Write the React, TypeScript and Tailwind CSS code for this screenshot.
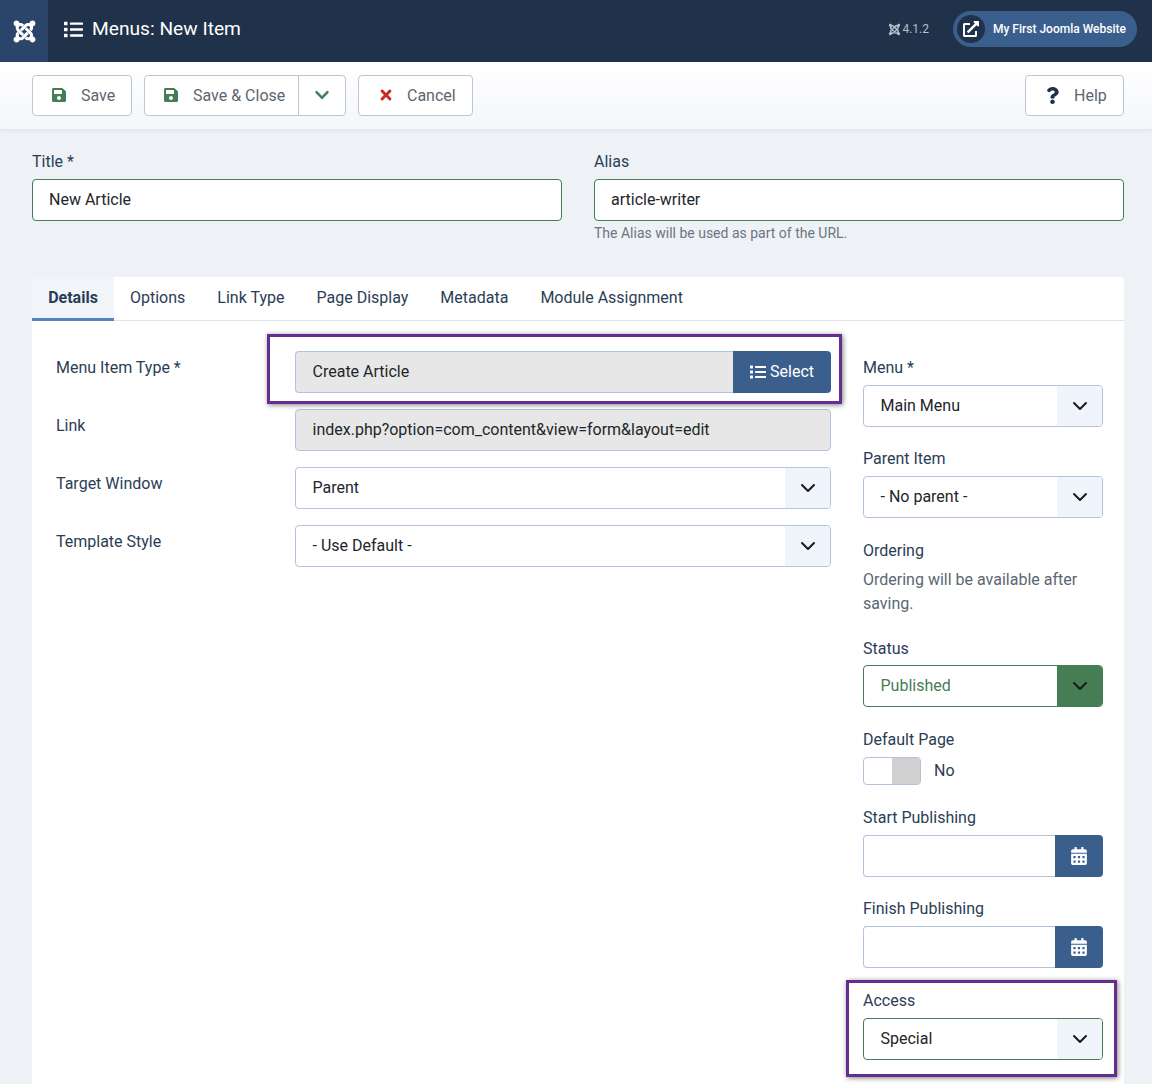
import React from 'react';
import { FaJoomla, FaList, FaSave, FaChevronDown, FaTimes, FaQuestion, FaExternalLinkAlt, FaCalendarAlt } from 'react-icons/fa';

const tabs = ['Options', 'Link Type', 'Page Display', 'Metadata', 'Module Assignment'];

const Arrow = () => (
  <svg width="16" height="16" viewBox="0 0 16 16" fill="none" aria-hidden="true">
    <path d="M2 5l6 6 6-6" stroke="#1a1a1a" strokeWidth="2" strokeLinecap="round" strokeLinejoin="round" />
  </svg>
);

const ToolButton = ({ icon, label, className = '' }: { icon: React.ReactNode; label: string; className?: string }) => (
  <button className={`flex h-[41px] items-center rounded border border-[#bcc7d6] bg-white text-[#5c6670] ${className}`}>
    {icon}
    <span className="mt-[2px]">{label}</span>
  </button>
);

const SelectBox = ({ value, green, published }: { value: string; green?: boolean; published?: boolean }) => (
  <div className={`flex h-[42px] items-stretch overflow-hidden rounded border ${green || published ? 'border-[#457d54]' : 'border-[#b2c4dc]'} bg-white`}>
    <div className={`flex flex-1 items-center pl-[16.5px] ${published ? 'text-[#457d54]' : 'text-[#22262a]'}`}>{value}</div>
    <div className={`flex w-[45px] items-center justify-center ${published ? 'bg-[#457d54]' : 'bg-[#f0f4fb]'}`}>
      <Arrow />
    </div>
  </div>
);

const DateBox = () => (
  <div className="flex h-[42px] items-stretch">
    <div className="flex-1 rounded-l border border-r-0 border-[#b2c4dc] bg-white" />
    <div className="flex w-[48px] items-center justify-center rounded-r bg-[#3b5f8d] text-white">
      <FaCalendarAlt className="text-[18px]" />
    </div>
  </div>
);

const Row = ({ label, children }: { label: string; children: React.ReactNode }) => (
  <div className="flex">
    <div className="w-[239px] pt-[5px] text-[#2b3d55]">{label}</div>
    <div className="w-[536px]">{children}</div>
  </div>
);

const Field = ({ label, className, children }: { label: string; className: string; children?: React.ReactNode }) => (
  <div className={className}>
    <div className="mb-[5px] h-[25px] pt-[1px] leading-[24px] text-[#2b3d55]">{label}</div>
    {children}
  </div>
);

export default function App() {
  return (
    <div className="relative h-[1084px] overflow-hidden bg-[#eef2f7] text-[16px] font-['Roboto',sans-serif]">
      <header className="flex h-[62px] items-center bg-[#20314a] pb-[4px] text-white">
        <div className="-mb-[4px] flex h-[62px] w-[48px] items-center justify-center bg-[#2a4569]">
          <FaJoomla className="text-[25px]" />
        </div>
        <FaList className="ml-[16px] text-[19px]" />
        <h1 className="ml-[9px] text-[19.2px]">Menus: New Item</h1>
        <div className="ml-auto flex items-center text-[12px] text-[#b6bfcb]">
          <FaJoomla className="mr-[1px] text-[13px]" />
          4.1.2
        </div>
        <div className="ml-[24px] mr-[15px] flex h-[36px] w-[184px] items-center rounded-full bg-[#3b5f8d] pl-[4px] text-[12px] font-medium">
          <span className="flex h-[28px] w-[28px] items-center justify-center rounded-full bg-[#20314a]">
            <FaExternalLinkAlt className="text-[16px]" />
          </span>
          <span className="ml-[8px]">My First Joomla Website</span>
        </div>
      </header>

      <div className="flex h-[68px] items-center border-b border-[#e4e8ee] bg-gradient-to-b from-white to-[#f4f6fa] pb-px pl-[32px] pr-[28px] shadow-[0_1px_4px_rgba(0,0,0,0.06)]">
        <ToolButton className="w-[100px] pl-[18px]" label="Save" icon={<FaSave className="mr-[14px] text-[16px] text-[#457d54]" />} />
        <div className="ml-[12px] flex h-[41px] rounded border border-[#bcc7d6] bg-white text-[#5c6670]">
          <div className="flex w-[154px] items-center border-r border-[#bcc7d6] pl-[18px]">
            <FaSave className="mr-[14px] text-[16px] text-[#457d54]" />
            <span className="mt-[2px]">Save &amp; Close</span>
          </div>
          <div className="flex w-[46px] items-center justify-center">
            <FaChevronDown className="text-[16px] text-[#457d54]" />
          </div>
        </div>
        <ToolButton className="ml-[12px] w-[115px] pl-[18.5px]" label="Cancel" icon={<FaTimes className="mr-[13.5px] text-[16px] text-[#c52827]" />} />
        <ToolButton className="ml-auto w-[99px] pl-[18px]" label="Help" icon={<FaQuestion className="mr-[13px] text-[17px] text-[#20314a]" />} />
      </div>

      <main className="pl-[32px] pr-[28px] pt-[20px]">
        <div className="grid grid-cols-2 gap-x-[32px]">
          <div>
            <div className="h-[24px] leading-[24px] text-[#2b3d55]">Title *</div>
            <div className="mt-[5px] flex h-[42px] items-center rounded border border-[#457d54] bg-white pl-[16px] text-[#22262a]">New Article</div>
          </div>
          <div>
            <div className="h-[24px] leading-[24px] text-[#2b3d55]">Alias</div>
            <div className="mt-[5px] flex h-[42px] items-center rounded border border-[#457d54] bg-white pl-[16px] text-[#22262a]">article-writer</div>
            <div className="mt-[2px] text-[14px] text-[#6d757e]">The Alias will be used as part of the URL.</div>
          </div>
        </div>

        <section className="mt-[33px] h-[900px] rounded-t bg-white">
          <nav className="flex h-[44px] border-b border-[#dfe6f0] text-[#2b3d55]">
            <div className="-mb-px flex w-[82px] items-center justify-center border-b-[3px] border-[#5582c0] bg-[#f2f5f9] font-bold">Details</div>
            {tabs.map(t => (
              <div key={t} className="flex items-center px-[16px] pb-[2px]">{t}</div>
            ))}
          </nav>
          <div className="flex pl-[24px] pt-[30px]">
            <div className="flex flex-col gap-[16px]">
              <Row label="Menu Item Type *">
                <div className="flex h-[42px]">
                  <div className="flex flex-1 items-center rounded-l border border-r-0 border-[#b2c4dc] bg-[#e7e7e7] pl-[16.5px] text-[#22262a]">Create Article</div>
                  <div className="flex w-[98px] items-center justify-center rounded-r bg-[#3b5f8d] text-white">
                    <FaList className="mr-[4px] text-[16px]" />
                    Select
                  </div>
                </div>
              </Row>
              <Row label="Link">
                <div className="flex h-[42px] items-center rounded border border-[#b2c4dc] bg-[#e7e7e7] pl-[16.5px] text-[#22262a]">index.php?option=com_content&amp;view=form&amp;layout=edit</div>
              </Row>
              <Row label="Target Window"><SelectBox value="Parent" /></Row>
              <Row label="Template Style"><SelectBox value="- Use Default -" /></Row>
            </div>
            <div className="ml-[32px] w-[240px] pt-[4px]">
              <Field label="Menu *" className=""><SelectBox value="Main Menu" /></Field>
              <Field label="Parent Item" className="mt-[19px]"><SelectBox value="- No parent -" /></Field>
              <Field label="Ordering" className="mt-[20px]">
                <div className="leading-[24px] text-[#5c6670]">Ordering will be available after saving.</div>
              </Field>
              <Field label="Status" className="mt-[20px]"><div className="-mt-[1px]"><SelectBox value="Published" published /></div></Field>
              <Field label="Default Page" className="mt-[20px]">
                <div className="flex items-center">
                  <div className="flex h-[28px] w-[58px] overflow-hidden rounded border border-[#b2c4dc] bg-white">
                    <div className="w-[28px]" />
                    <div className="flex-1 bg-[#d1d1d1]" />
                  </div>
                  <span className="ml-[13px] text-[#2b3d55]">No</span>
                </div>
              </Field>
              <Field label="Start Publishing" className="mt-[20px]"><DateBox /></Field>
              <Field label="Finish Publishing" className="mt-[19px]"><DateBox /></Field>
              <Field label="Access" className="mt-[20px]"><SelectBox value="Special" green /></Field>
            </div>
          </div>
        </section>
      </main>

      {/* purple highlight boxes drawn over the screenshot */}
      <div className="pointer-events-none absolute left-[267px] top-[334px] h-[70px] w-[575px] border-[3px] border-[#662d91] shadow-[1px_1px_5px_rgba(0,0,0,0.5)]" />
      <div className="pointer-events-none absolute left-[846px] top-[980px] h-[97px] w-[271px] border-[3px] border-[#662d91] shadow-[1px_1px_5px_rgba(0,0,0,0.5)]" />
    </div>
  );
}
